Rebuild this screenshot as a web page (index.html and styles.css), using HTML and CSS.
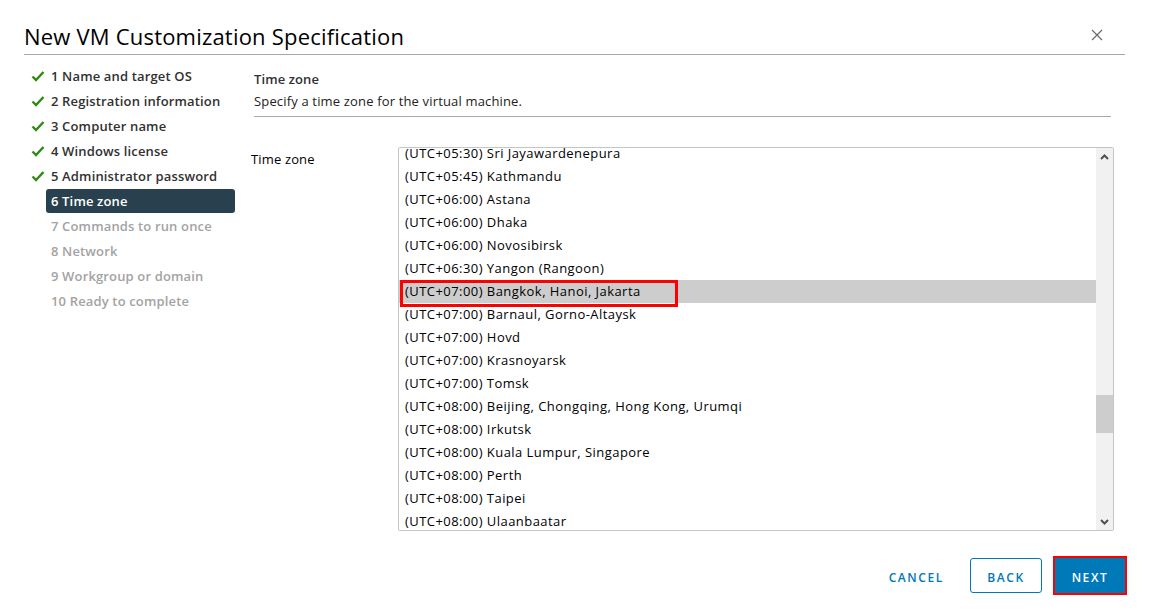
FILE: index.html
```html
<!DOCTYPE html>
<html>
<head>
<meta charset="utf-8">
<link rel="stylesheet" href="styles.css">
</head>
<body>
<div class="dialog">
  <div class="header">
    <h1 class="title">New VM Customization Specification</h1>
    <button class="close" aria-label="Close">
      <svg width="12" height="12" viewBox="0 0 12 12"><path d="M1 1 L11 11 M11 1 L1 11" stroke="#6a6a6a" stroke-width="1.2" fill="none"/></svg>
    </button>
  </div>
  <div class="body">
    <nav class="steps">
      <div class="step done"><span class="ico"><svg width="14" height="12" viewBox="0 0 14 12"><path d="M1.5 6.5 L5 10 L12.5 2" stroke="#2f8a14" stroke-width="2.4" fill="none"/></svg></span><span class="lbl">1 Name and target OS</span></div>
      <div class="step done"><span class="ico"><svg width="14" height="12" viewBox="0 0 14 12"><path d="M1.5 6.5 L5 10 L12.5 2" stroke="#2f8a14" stroke-width="2.4" fill="none"/></svg></span><span class="lbl">2 Registration information</span></div>
      <div class="step done"><span class="ico"><svg width="14" height="12" viewBox="0 0 14 12"><path d="M1.5 6.5 L5 10 L12.5 2" stroke="#2f8a14" stroke-width="2.4" fill="none"/></svg></span><span class="lbl">3 Computer name</span></div>
      <div class="step done"><span class="ico"><svg width="14" height="12" viewBox="0 0 14 12"><path d="M1.5 6.5 L5 10 L12.5 2" stroke="#2f8a14" stroke-width="2.4" fill="none"/></svg></span><span class="lbl">4 Windows license</span></div>
      <div class="step done"><span class="ico"><svg width="14" height="12" viewBox="0 0 14 12"><path d="M1.5 6.5 L5 10 L12.5 2" stroke="#2f8a14" stroke-width="2.4" fill="none"/></svg></span><span class="lbl">5 Administrator password</span></div>
      <div class="step active"><span class="ico"></span><span class="lbl">6 Time zone</span></div>
      <div class="step todo"><span class="ico"></span><span class="lbl">7 Commands to run once</span></div>
      <div class="step todo"><span class="ico"></span><span class="lbl">8 Network</span></div>
      <div class="step todo"><span class="ico"></span><span class="lbl">9 Workgroup or domain</span></div>
      <div class="step todo"><span class="ico"></span><span class="lbl">10 Ready to complete</span></div>
    </nav>
    <main class="content">
      <div class="section-head">
        <div class="sec-title">Time zone</div>
        <div class="sec-desc">Specify a time zone for the virtual machine.</div>
      </div>
      <div class="form-row">
        <label class="form-label">Time zone</label>
        <div class="listbox">
          <div class="viewport">
            <div class="rows">
              <div class="row">(UTC+05:30) Sri Jayawardenepura</div>
              <div class="row">(UTC+05:45) Kathmandu</div>
              <div class="row">(UTC+06:00) Astana</div>
              <div class="row">(UTC+06:00) Dhaka</div>
              <div class="row">(UTC+06:00) Novosibirsk</div>
              <div class="row">(UTC+06:30) Yangon (Rangoon)</div>
              <div class="row selected"><span class="mark">(UTC+07:00) Bangkok, Hanoi, Jakarta</span></div>
              <div class="row">(UTC+07:00) Barnaul, Gorno-Altaysk</div>
              <div class="row">(UTC+07:00) Hovd</div>
              <div class="row">(UTC+07:00) Krasnoyarsk</div>
              <div class="row">(UTC+07:00) Tomsk</div>
              <div class="row">(UTC+08:00) Beijing, Chongqing, Hong Kong, Urumqi</div>
              <div class="row">(UTC+08:00) Irkutsk</div>
              <div class="row">(UTC+08:00) Kuala Lumpur, Singapore</div>
              <div class="row">(UTC+08:00) Perth</div>
              <div class="row">(UTC+08:00) Taipei</div>
              <div class="row">(UTC+08:00) Ulaanbaatar</div>
            </div>
          </div>
          <div class="scrollbar">
            <div class="sb-btn"><svg width="9" height="6" viewBox="0 0 9 6"><path d="M1 5 L4.5 1.5 L8 5" stroke="#505050" stroke-width="2" fill="none"/></svg></div>
            <div class="sb-track">
              <div class="sb-space"></div>
              <div class="sb-thumb"></div>
            </div>
            <div class="sb-btn"><svg width="9" height="6" viewBox="0 0 9 6"><path d="M1 1 L4.5 4.5 L8 1" stroke="#505050" stroke-width="2" fill="none"/></svg></div>
          </div>
        </div>
      </div>
    </main>
  </div>
  <div class="footer">
    <button class="btn flat">CANCEL</button>
    <button class="btn outline">BACK</button>
    <button class="btn primary">NEXT</button>
  </div>
</div>
</body>
</html>
```
FILE: styles.css
```css
*, *::before, *::after { box-sizing: border-box; }
html, body { margin: 0; padding: 0; background: #fff; }
body {
  font-family: "Open Sans", "Noto Sans", "Liberation Sans", sans-serif;
  color: #313131;
  width: 1149px;
  height: 614px;
  overflow: hidden;
}
.dialog { padding: 0 24px; }

.header {
  display: flex;
  align-items: flex-end;
  justify-content: space-between;
  height: 55px;
  border-bottom: 1px solid #a8a8a8;
  padding-bottom: 5px;
}
.title {
  margin: 0;
  font-size: 22px;
  font-weight: 400;
  line-height: 26px;
  color: #000;
  letter-spacing: 0.2px;
}
.close {
  border: 0;
  background: none;
  padding: 0;
  margin: 0 22px 8px 0;
  width: 12px;
  height: 12px;
  display: flex;
}

.body { display: flex; height: 493px; }
.steps {
  width: 230px;
  padding-top: 9px;
  display: flex;
  flex-direction: column;
  gap: 1px;
}
.step { display: flex; align-items: center; height: 24px; }
.ico { width: 22px; display: flex; justify-content: flex-start; padding-left: 7px; }
.lbl {
  flex: 0 0 189px;
  height: 24px;
  line-height: 24px;
  padding-left: 5px;
  font-size: 13px;
  font-weight: 600;
  letter-spacing: 0.15px;
  border-radius: 3px;
  white-space: nowrap;
}
.step.done .lbl { color: #313131; }
.step.active .lbl { background: #29414e; color: #fff; }
.step.todo .lbl { color: #a3a3a3; }

.content { flex: 1; padding-top: 14px; }
.section-head {
  width: 857px;
  border-bottom: 1px solid #a8a8a8;
  padding-bottom: 5px;
}
.sec-title { font-size: 13px; font-weight: 600; line-height: 20px; margin-bottom: 2px; letter-spacing: 0.1px; }
.sec-desc { font-size: 13px; line-height: 20px; letter-spacing: 0.16px; color: #222; }

.form-row { display: flex; margin-top: 30px; }
.form-label {
  width: 147px;
  margin-left: -3px;
  padding-top: 2px;
  font-size: 13px;
  line-height: 20px;
  letter-spacing: 0.15px;
  color: #000;
}
.listbox {
  width: 716px;
  height: 384px;
  border: 1px solid #c5c5c5;
  border-radius: 2px;
  display: flex;
  overflow: hidden;
}
.viewport { flex: 1; overflow: hidden; }
.rows { margin-top: -6.5px; }
.row {
  height: 23px;
  line-height: 23px;
  padding-left: 6px;
  font-size: 13px;
  letter-spacing: 0.45px;
  color: #000;
  white-space: nowrap;
}
.row.selected { background: #cdcdcd; position: relative; }
.mark::after {
  content: "";
  position: absolute;
  left: 1px;
  top: 0;
  width: 278px;
  height: 27px;
  border: 3px solid #f00;
  pointer-events: none;
}

.scrollbar {
  width: 17px;
  background: #f1f1f1;
  display: flex;
  flex-direction: column;
}
.sb-btn { height: 17px; display: flex; align-items: center; justify-content: center; }
.sb-track { flex: 1; display: flex; flex-direction: column; }
.sb-space { height: 230px; }
.sb-thumb { height: 38px; background: #cdcdcd; }

.footer {
  display: flex;
  justify-content: flex-end;
  align-items: center;
  gap: 13px;
  padding-top: 10px;
}
.btn {
  font-family: inherit;
  font-size: 12px;
  font-weight: 600;
  letter-spacing: 1.6px;
  height: 35px;
  border-radius: 3px;
  padding: 3px 12px 0;
  cursor: pointer;
}
.btn.flat { background: none; border: 0; color: #0079b8; margin-right: 1px; }
.btn.outline { background: #fff; border: 1px solid #0079b8; color: #0079b8; width: 72px; }
.btn.primary {
  background: #0079b8;
  border: 0;
  color: #fff;
  width: 70px;
  border-radius: 0;
  outline: 2px solid #f00;
}
```
